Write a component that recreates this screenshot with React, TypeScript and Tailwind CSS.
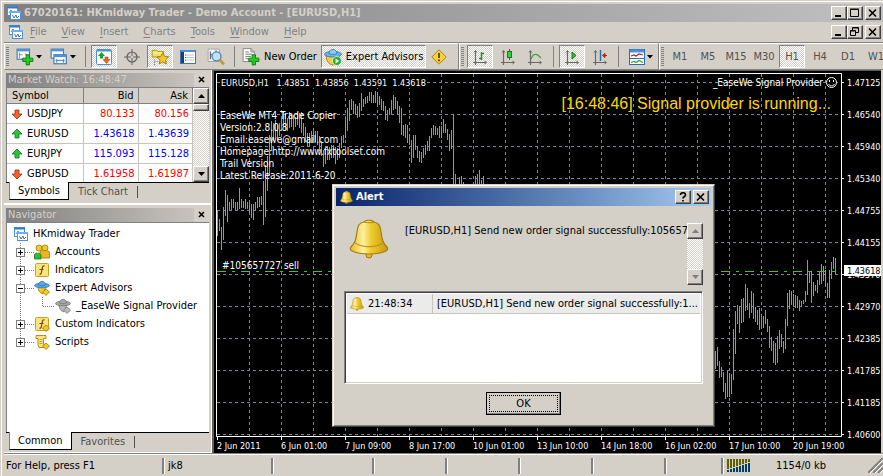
import type { ReactNode } from 'react';

const raised =
  'border border-t-white border-l-white border-r-[#404040] border-b-[#404040] shadow-[inset_-1px_-1px_0_#808080]';
const pressed = 'border border-t-[#808080] border-l-[#808080] border-r-white border-b-white';
const checker =
  'bg-[#ebe8e3] bg-[repeating-conic-gradient(#d4d0c8_0_25%,#ffffff_0_50%)] bg-[length:2px_2px]';

/* ---------- icons ---------- */

function Icon({ size = 16, children }: { size?: number; children: ReactNode }) {
  return (
    <svg width={size} height={size} viewBox="0 0 16 16" className="shrink-0" aria-hidden="true">
      {children}
    </svg>
  );
}

function AppIcon() {
  return (
    <Icon>
      <rect x="1.5" y="1.5" width="10" height="9" fill="#fff" stroke="#4a90dc" />
      <path d="M1 2.5h11" stroke="#2f7bd0" strokeWidth="2" />
      <path d="M3 8l2-3 2 3 2-2" fill="none" stroke="#4a90dc" />
      <rect x="4.5" y="6.5" width="10" height="8" fill="#fff" stroke="#4a90dc" />
      <path d="M4 7h11" stroke="#6ab0f0" strokeWidth="2" />
      <path d="M6.500 10l1.500 3 2-3 1 3 2-2" fill="none" stroke="#3878c0" />
    </Icon>
  );
}

function NewChartIcon() {
  return (
    <Icon size={18}>
      <rect x="1" y="1" width="11" height="9" fill="#fff" stroke="#3c78b4" />
      <path d="M1 2h11" stroke="#4a90dc" strokeWidth="2" />
      <path d="M3 4v5M3 6h3M8 5l2 2" stroke="#7898b8" />
      <path d="M9 6h3v3h3v3h-3v3H9v-3H6V9h3z" fill="#26c826" stroke="#0a7a0a" strokeWidth=".8" />
    </Icon>
  );
}

function ProfilesIcon() {
  return (
    <Icon size={18}>
      <rect x="1" y="1" width="11" height="8" fill="#fff" stroke="#3c78b4" />
      <path d="M1 2h11" stroke="#4a90dc" strokeWidth="2" />
      <rect x="3.500" y="6" width="11" height="8" fill="#eef5fc" stroke="#3c78b4" />
      <path d="M3.500 7h11" stroke="#4a90dc" strokeWidth="2" />
      <path d="M5 11h8M6 10v3M12 10v3" stroke="#4878a8" strokeWidth=".8" />
    </Icon>
  );
}

function MarketWatchIcon() {
  return (
    <Icon>
      <rect x=".5" y=".5" width="15" height="15" rx="1" fill="#fff" stroke="#4a90dc" />
      <path d="M1 1.500h14" stroke="#4a90dc" strokeWidth="2" />
      <path d="M5.500 3L2 7h2v2.500h3V7h2z" fill="#20a020" />
      <path d="M10.500 14.500l3.500-4h-2V8H9v2.500H7z" fill="#f06020" stroke="#b03010" strokeWidth=".5" />
    </Icon>
  );
}

function CrosshairIcon() {
  return (
    <Icon>
      <circle cx="8" cy="8" r="5" fill="none" stroke="#606060" strokeWidth="1.200" />
      <path d="M8 0v7M8 9v7M0 8h7M9 8h7" stroke="#606060" />
    </Icon>
  );
}

function NavigatorIcon() {
  return (
    <Icon size={18}>
      <path d="M1 2h4l1 1h5v5H1z" fill="#f8dc60" stroke="#b08a10" strokeWidth=".8" />
      <path d="M1.500 4.500h9" stroke="#fff4b0" />
      <path d="M3 10v5M3 12h3" stroke="#909090" strokeDasharray="1 1" />
      <path
        d="M10.500 4l1.600 3.400 3.600.5-2.700 2.600.7 3.700-3.200-1.800-3.200 1.800.7-3.700-2.700-2.600 3.600-.5z"
        fill="#f4c828"
        stroke="#a07808"
        strokeWidth=".8"
      />
    </Icon>
  );
}

function TerminalIcon() {
  return (
    <Icon>
      <rect x=".5" y="1.500" width="15" height="13" fill="#fff" stroke="#3c78b4" />
      <path d="M1 2h14" stroke="#4a90dc" strokeWidth="2" />
      <path d="M2.500 3v11" stroke="#1c3c78" strokeWidth="3" />
      <path d="M6 6h8M6 8.500h8M6 11h8" stroke="#b8c4d4" />
      <path d="M5 6h1M5 8.500h1M5 11h1" stroke="#c03020" />
    </Icon>
  );
}

function TesterIcon() {
  return (
    <Icon size={18}>
      <path d="M1 1h10v11H1z" fill="#f4f4f4" stroke="#a0a0a0" strokeWidth=".8" />
      <path d="M3 3v7M3 6h3M8 2v5" stroke="#606060" />
      <circle cx="8.500" cy="7.500" r="4" fill="#c4e0f8" stroke="#4a88c0" strokeWidth="1.200" />
      <path d="M11.500 10.500l3.500 4" stroke="#c89820" strokeWidth="2.400" />
    </Icon>
  );
}

function NewOrderIcon() {
  return (
    <Icon size={18}>
      <path d="M1 .5h7l3 3V12H1z" fill="#fff" stroke="#808080" strokeWidth=".8" />
      <path d="M8 .5v3h3M3 3.500h3M3 5.500h6M3 7.500h5M3 9.500h3" fill="none" stroke="#707070" strokeWidth=".8" />
      <path d="M9 6h3v3h3v3h-3v3H9v-3H6V9h3z" fill="#26c826" stroke="#0a7a0a" strokeWidth=".8" />
    </Icon>
  );
}

function ExpertsIcon() {
  return (
    <Icon size={18}>
      <path d="M2 7c0 5 3 8 6 8s6-3 6-8z" fill="#f4cc40" stroke="#a88010" strokeWidth=".8" />
      <ellipse cx="8" cy="5.500" rx="7.500" ry="2.500" fill="#6cb4ec" stroke="#2c70b0" strokeWidth=".7" />
      <path d="M4.500 5c0-5 7-5 7 0-2 1-5 1-7 0z" fill="#8cc8f4" stroke="#2c70b0" strokeWidth=".7" />
      <circle cx="11.500" cy="11.500" r="4" fill="#20b030" stroke="#fff" strokeWidth=".6" />
      <path d="M10.300 9.300v4.400l3.200-2.200z" fill="#fff" />
    </Icon>
  );
}

function WarningIcon() {
  return (
    <Icon>
      <path d="M8 .8L15.200 8 8 15.200.8 8z" fill="#f8d038" stroke="#b08408" />
      <path d="M8 4v5M8 10.500v1.800" stroke="#604000" strokeWidth="1.800" />
    </Icon>
  );
}

function Axes({ children }: { children: ReactNode }) {
  return (
    <Icon>
      <path d="M3.500 2v14M1 13.500h13" fill="none" stroke="#686868" strokeWidth="1.200" />
      <path d="M2 3.500L3.500 1.500 5 3.500M12.500 12l2 1.500-2 1.500" fill="none" stroke="#686868" />
      {children}
    </Icon>
  );
}

function IndicatorsIcon() {
  return (
    <Icon>
      <rect x=".5" y=".5" width="15" height="15" fill="#fff" stroke="#2c6cb0" />
      <path d="M1 2h14" stroke="#4a90dc" strokeWidth="3" />
      <path d="M1 9.500h14" stroke="#2c6cb0" />
      <path d="M2 7l3-1 2 1 3-2 4 1" fill="none" stroke="#a02820" strokeWidth="1.200" />
      <path d="M2 13.500l3-1 2 1 3-2 4 2" fill="none" stroke="#30a030" strokeWidth="1.200" />
    </Icon>
  );
}

function PriceArrow({ up }: { up: boolean }) {
  return (
    <svg width="12" height="12" viewBox="0 0 12 12" className="shrink-0" aria-hidden="true">
      {up ? (
        <path d="M6 1l5 5H8v4H4V6H1z" fill="#30c040" stroke="#107820" strokeWidth=".8" />
      ) : (
        <path d="M6 11L1 6h3V2h4v4h3z" fill="#f06030" stroke="#a03010" strokeWidth=".8" />
      )}
    </svg>
  );
}

function Bell({ size }: { size: number }) {
  return (
    <svg width={size} height={size} viewBox="0 0 40 40" className="shrink-0" aria-hidden="true">
      <defs>
        <linearGradient id="bell" x1="0" x2="1">
          <stop offset="0" stopColor="#e8bc20" />
          <stop offset=".35" stopColor="#fdf0a0" />
          <stop offset=".55" stopColor="#f0cc30" />
          <stop offset="1" stopColor="#c89808" />
        </linearGradient>
      </defs>
      <ellipse cx="20" cy="36" rx="3" ry="3" fill="#e8b820" stroke="#a07808" />
      <path
        d="M20 1c3 0 4 1 5 2 5 1 6 3 7 10 1 8 2 11 6 15 1 1 1 3-1 4-8 4-26 4-34 0-2-1-2-3-1-4 4-4 5-7 6-15 1-7 2-9 7-10 1-1 2-2 5-2z"
        fill="url(#bell)"
        stroke="#a07c10"
        strokeWidth="1.200"
      />
      <path d="M6 24c8 5 20 5 28 0M15 3c2 1 8 1 10 0" fill="none" stroke="#b08a10" />
    </svg>
  );
}

function AccountsIcon() {
  return (
    <Icon>
      <circle cx="5" cy="4" r="3" fill="#f4c828" stroke="#a07808" strokeWidth=".8" />
      <circle cx="11" cy="4" r="3" fill="#f4c828" stroke="#a07808" strokeWidth=".8" />
      <path d="M6 14V8c0-2 9-2 9.500 0v6z" fill="#e8b820" stroke="#a07808" strokeWidth=".8" />
      <path d="M.5 15v-4c0-2.500 6-2.500 6.500 0v4z" fill="#38b838" stroke="#187818" strokeWidth=".8" />
    </Icon>
  );
}

function FunctionIcon({ tagged = false }: { tagged?: boolean }) {
  return (
    <Icon>
      <rect x="1.500" y="1.500" width="13" height="13" rx="1" fill="#fbe480" stroke="#c8a020" />
      <path d="M10.500 4c-2-.5-2 1-2.400 3l-.6 3c-.3 2-1 2.500-2 2M5.500 7.500h4" fill="none" stroke="#705008" strokeWidth="1.200" />
      {tagged && <path d="M12 9l3.500 3-3.500 3.500L8.500 12z" fill="#f4c828" stroke="#a07808" strokeWidth=".8" />}
    </Icon>
  );
}

function HatIcon({ muted = false }: { muted?: boolean }) {
  const brim = muted ? '#a8a8a8' : '#58a8e8';
  const edge = muted ? '#707070' : '#2c70b0';
  const gold = muted ? '#b8b8b8' : '#f4c828';
  const goldEdge = muted ? '#787878' : '#a07808';
  return (
    <Icon>
      <path d="M4 7c0 4 2 6 5 7l3-7z" fill={gold} stroke={goldEdge} strokeWidth=".8" />
      <ellipse cx="8" cy="5.500" rx="7.500" ry="2.300" fill={brim} stroke={edge} strokeWidth=".7" />
      <path d="M4.500 5c0-5 7-5 7 0-2 1-5 1-7 0z" fill={brim} stroke={edge} strokeWidth=".7" />
      <path d="M12 9l3.500 3-3.500 3.500L8.500 12z" fill={gold} stroke={goldEdge} strokeWidth=".8" />
    </Icon>
  );
}

function ScriptIcon() {
  return (
    <Icon>
      <path d="M2 1.500h10v3H9.500v6H12l1 3H5L4 10.500v-6H2z" fill="#fbe480" stroke="#b89018" />
      <path d="M5.500 5.500h3M5.500 7.500h3M5.500 9.500h3" stroke="#b89018" strokeWidth=".8" />
      <path d="M12 9l3.500 3-3.500 3.500L8.500 12z" fill="#f4c828" stroke="#a07808" strokeWidth=".8" />
    </Icon>
  );
}

/* ---------- window frame ---------- */

type Glyph = 'min' | 'max' | 'restore' | 'close' | 'help';

function CaptionButton({ glyph, label }: { glyph: Glyph; label: string }) {
  return (
    <button aria-label={label} className={`flex h-[14px] w-4 items-center justify-center bg-[#d4d0c8] ${raised}`}>
      <svg width="12" height="10" viewBox="0 0 12 10" aria-hidden="true">
        {glyph === 'min' && <path d="M2 8h6" stroke="#000" strokeWidth="2" />}
        {glyph === 'max' && <path d="M1.500 1.500h8v7h-8zM1 1h9" fill="none" stroke="#000" strokeWidth="1" />}
        {glyph === 'restore' && (
          <path d="M3.500 3V.5h6v5H7M1.500 3.500h5v5h-5zM1 4h6M3 1h6" fill="none" stroke="#000" />
        )}
        {glyph === 'close' && <path d="M2 1.500l7 7M9 1.500l-7 7" stroke="#000" strokeWidth="1.600" />}
        {glyph === 'help' && (
          <path d="M3.500 3c0-3 5-3 5 0 0 1.500-2.500 1.500-2.500 3.500M6 8v1.500" fill="none" stroke="#000" strokeWidth="1.700" />
        )}
      </svg>
    </button>
  );
}

function WindowButtons({ restore = false }: { restore?: boolean }) {
  return (
    <div className="ml-auto flex pr-[2px]">
      <CaptionButton glyph="min" label="Minimize" />
      <CaptionButton glyph={restore ? 'restore' : 'max'} label={restore ? 'Restore' : 'Maximize'} />
      <div className="w-[2px]" />
      <CaptionButton glyph="close" label="Close" />
    </div>
  );
}

const menus = ['File', 'View', 'Insert', 'Charts', 'Tools', 'Window', 'Help'];

function MenuBar() {
  return (
    <nav className="flex h-5 items-center pl-1">
      <AppIcon />
      <div className="ml-[6px] flex gap-[15px] text-[#808080]">
        {menus.map((m) => (
          <button key={m}>
            <span className="underline underline-offset-2">{m[0]}</span>
            {m.slice(1)}
          </button>
        ))}
      </div>
      <WindowButtons restore />
    </nav>
  );
}

/* ---------- toolbars ---------- */

function Grip() {
  return (
    <div className="mr-[2px] ml-px h-5 w-[3px] shrink-0 bg-[repeating-linear-gradient(#808080_0_1px,#d4d0c8_1px_2px)]" />
  );
}

function Separator() {
  return <div className="mx-[5px] h-[21px] w-px shrink-0 bg-[#808080]" />;
}

function ToolButton({ label, on = false, wide = false, children }: {
  label: string;
  on?: boolean;
  wide?: boolean;
  children: ReactNode;
}) {
  return (
    <button
      aria-label={label}
      aria-pressed={on}
      className={`flex h-[23px] shrink-0 items-center justify-center ${wide ? 'gap-1 px-[2px]' : 'w-[26px]'} ${
        on ? `${pressed} ${checker}` : ''
      }`}
    >
      {children}
    </button>
  );
}

function DropButton({ label, children }: { label: string; children: ReactNode }) {
  return (
    <button aria-label={label} className="flex h-[23px] w-[34px] shrink-0 items-center justify-center gap-[2px]">
      {children}
      <svg width="6" height="4" viewBox="0 0 6 4" aria-hidden="true">
        <path d="M0 0h6L3 3.500z" fill="#000" />
      </svg>
    </button>
  );
}

function ToolbarBand({ grow = false, children }: { grow?: boolean; children: ReactNode }) {
  return (
    <div
      role="toolbar"
      className={`flex h-[27px] items-center border-t border-b border-l border-t-white border-b-[#808080] border-l-white ${
        grow ? 'min-w-0 grow overflow-hidden' : 'shrink-0 border-r border-r-[#808080]'
      }`}
    >
      <Grip />
      {children}
    </div>
  );
}

const periods = ['M1', 'M5', 'M15', 'M30', 'H1', 'H4', 'D1', 'W1'];

function Toolbars() {
  return (
    <div className="flex border-t border-[#808080]">
      <ToolbarBand>
        <div className="flex w-[447px] items-center pl-px whitespace-nowrap">
          <DropButton label="New chart"><NewChartIcon /></DropButton>
          <DropButton label="Profiles"><ProfilesIcon /></DropButton>
          <Separator />
          <div className="flex gap-[2px]">
            <ToolButton label="Market Watch" on><MarketWatchIcon /></ToolButton>
            <ToolButton label="Data Window"><CrosshairIcon /></ToolButton>
            <ToolButton label="Navigator" on><NavigatorIcon /></ToolButton>
            <ToolButton label="Terminal"><TerminalIcon /></ToolButton>
            <ToolButton label="Strategy Tester"><TesterIcon /></ToolButton>
          </div>
          <Separator />
          <ToolButton label="New Order" wide><NewOrderIcon />New Order</ToolButton>
          <div className="w-[2px]" />
          <ToolButton label="Expert Advisors" on wide><ExpertsIcon />Expert Advisors</ToolButton>
          <ToolButton label="Options"><WarningIcon /></ToolButton>
        </div>
      </ToolbarBand>
      <ToolbarBand>
        <div className="flex w-[192px] items-center pl-px">
          <ToolButton label="Bar Chart" on>
            <Axes><path d="M9.500 3v8M7 9.500h2.500M9.500 4.500H12" stroke="#209020" strokeWidth="1.500" fill="none" /></Axes>
          </ToolButton>
          <div className="w-[2px]" />
          <ToolButton label="Candlesticks">
            <Axes><path d="M9.500 0v11" stroke="#108010" /><rect x="7.500" y="2.500" width="4" height="6" fill="#30d040" stroke="#108010" /></Axes>
          </ToolButton>
          <div className="w-[2px]" />
          <ToolButton label="Line Chart">
            <Axes><path d="M4 10c2-6 6-6 10-1" stroke="#40a040" strokeWidth="1.300" fill="none" /></Axes>
          </ToolButton>
          <Separator />
          <ToolButton label="Auto Scroll" on>
            <Axes><path d="M8 3v7l4-3.500z" fill="#30c040" stroke="#108010" /></Axes>
          </ToolButton>
          <div className="w-[2px]" />
          <ToolButton label="Chart Shift">
            <Axes><path d="M8.500 1v11" stroke="#2c6cb0" strokeWidth="1.500" /><path d="M15 6.500h-3M13 4.500L10.500 6.500l2.500 2z" fill="#d04020" stroke="#a02810" /></Axes>
          </ToolButton>
          <Separator />
          <DropButton label="Indicators"><IndicatorsIcon /></DropButton>
        </div>
      </ToolbarBand>
      <ToolbarBand grow>
        {periods.map((p) => (
          <button
            key={p}
            aria-pressed={p === 'H1'}
            className={`mx-px h-[23px] w-[26px] shrink-0 text-center text-[#505050] ${
              p === 'H1' ? `${pressed} ${checker}` : ''
            }`}
          >
            {p}
          </button>
        ))}
      </ToolbarBand>
    </div>
  );
}

/* ---------- left panels ---------- */

function PanelTitle({ children }: { children: ReactNode }) {
  return (
    <header className="flex h-[15px] items-center">
      <h2 className="h-[14px] flex-1 bg-linear-to-r from-[#808080] to-[#c8c4bc] pl-[2px] leading-[13px] text-[#d4d0c8]">
        {children}
      </h2>
      <button aria-label="Close panel" className="flex w-[15px] justify-center">
        <svg width="7" height="7" viewBox="0 0 7 7" aria-hidden="true">
          <path d="M1 1l5 5M6 1L1 6" stroke="#000" strokeWidth="1.600" />
        </svg>
      </button>
    </header>
  );
}

function PanelTabs({ tabs }: { tabs: [string, string] }) {
  return (
    <div role="tablist" className="flex h-[18px] shrink-0 items-start">
      <div className="h-px w-[3px] bg-black" />
      <button role="tab" aria-selected className="h-[18px] border-r border-b border-l border-black border-l-[#808080] bg-white px-2 leading-4">
        {tabs[0]}
      </button>
      <div className="flex h-[18px] flex-1 items-center border-t border-black pl-[9px] text-[#505050]">
        <button role="tab" aria-selected={false}>{tabs[1]}</button>
        <div className="ml-[9px] h-3 w-px bg-[#505050]" />
      </div>
    </div>
  );
}

function ScrollButton({ down = false, dim = false }: { down?: boolean; dim?: boolean }) {
  return (
    <button
      aria-label={down ? 'Scroll down' : 'Scroll up'}
      className={`flex h-4 w-full shrink-0 items-center justify-center bg-[#d4d0c8] ${raised}`}
    >
      <svg width="7" height="4" viewBox="0 0 7 4" aria-hidden="true">
        <path d={down ? 'M0 0h7L3.500 4z' : 'M0 4h7L3.500 0z'} fill={dim ? '#808080' : '#000'} />
      </svg>
    </button>
  );
}

const quotes = [
  { symbol: 'USDJPY', bid: '80.133', ask: '80.156', up: false },
  { symbol: 'EURUSD', bid: '1.43618', ask: '1.43639', up: true },
  { symbol: 'EURJPY', bid: '115.093', ask: '115.128', up: true },
  { symbol: 'GBPUSD', bid: '1.61958', ask: '1.61987', up: false },
];

function MarketWatch() {
  const head = 'h-4 border-r border-b border-[#808080] p-0 font-normal';
  const cell = 'h-5 border-r border-b border-[#c8c4bc] p-0';
  return (
    <section className="flex flex-col border-r border-b border-white p-[2px] pb-[3px]">
      <PanelTitle>Market Watch: 16:48:47</PanelTitle>
      <div className="flex h-[95px] border-t border-l border-[#808080] bg-white">
        <div className="flex-1 overflow-hidden">
          <table className="w-full table-fixed border-separate border-spacing-0">
            <thead className="bg-[#d4d0c8]">
              <tr>
                <th className={`${head} w-[77px] pl-[5px] text-left`}>Symbol</th>
                <th className={`${head} pr-1 text-right`}>Bid</th>
                <th className={`${head} pr-1 text-right`}>Ask</th>
              </tr>
            </thead>
            <tbody>
              {quotes.map((q) => (
                <tr key={q.symbol} className={q.up ? 'text-[#0000ff]' : 'text-[#ff0000]'}>
                  <td className={`${cell} pl-1 text-black`}>
                    <div className="flex items-center gap-1">
                      <PriceArrow up={q.up} />
                      {q.symbol}
                    </div>
                  </td>
                  <td className={`${cell} pr-[3px] text-right`}>{q.bid}</td>
                  <td className={`${cell} pr-[3px] text-right`}>{q.ask}</td>
                </tr>
              ))}
            </tbody>
          </table>
        </div>
        <div className={`flex w-4 flex-col ${checker}`}>
          <ScrollButton />
          <div className={`h-[7px] bg-[#d4d0c8] ${raised}`} />
          <div className="flex-1" />
          <ScrollButton down />
        </div>
      </div>
      <PanelTabs tabs={['Symbols', 'Tick Chart']} />
    </section>
  );
}

function ExpandBox({ open, last }: { open: boolean; last: boolean }) {
  return (
    <svg width="22" height="18" viewBox="0 0 22 18" className="shrink-0" aria-hidden="true">
      <path d={last ? 'M8.500 0v9M13 9.500h9' : 'M8.500 0v18M13 9.500h9'} stroke="#808080" strokeDasharray="1 1" />
      <rect x="4.500" y="5.500" width="8" height="8" fill="#fff" stroke="#808080" />
      <path d={open ? 'M6 9.500h5' : 'M6 9.500h5M8.500 7v5'} stroke="#000" />
    </svg>
  );
}

const tree = [
  { name: 'Accounts', icon: <AccountsIcon />, open: false },
  { name: 'Indicators', icon: <FunctionIcon />, open: false },
  { name: 'Expert Advisors', icon: <HatIcon />, open: true, child: '_EaseWe Signal Provider' },
  { name: 'Custom Indicators', icon: <FunctionIcon tagged />, open: false },
  { name: 'Scripts', icon: <ScriptIcon />, open: false },
];

function Navigator() {
  const row = 'flex h-[18px] items-center whitespace-nowrap';
  return (
    <section className="flex min-h-0 flex-1 flex-col border-t border-r border-b border-white p-[2px]">
      <PanelTitle>Navigator</PanelTitle>
      <div className="min-h-0 flex-1 overflow-hidden border-t border-l border-[#808080] bg-white pt-[2px]">
        <div className={`${row} gap-1 pl-[6px]`}>
          <AppIcon />
          HKmidway Trader
        </div>
        <ul className="pl-[5px]">
          {tree.map((n, i) => (
            <li key={n.name}>
              <div className={row}>
                <ExpandBox open={n.open} last={i === tree.length - 1} />
                {n.icon}
                <span className="ml-[5px]">{n.name}</span>
              </div>
              {n.child && (
                <div className={row}>
                  <svg width="43" height="18" viewBox="0 0 43 18" className="shrink-0" aria-hidden="true">
                    <path d="M8.500 0v18M30.500 0v9.500H42" fill="none" stroke="#808080" strokeDasharray="1 1" />
                  </svg>
                  <HatIcon muted />
                  <span className="ml-[5px]">{n.child}</span>
                </div>
              )}
            </li>
          ))}
        </ul>
      </div>
      <PanelTabs tabs={['Common', 'Favorites']} />
    </section>
  );
}

/* ---------- price chart ---------- */

/* High/low pairs of consecutive hourly bars, three ticks to a pixel. */
const earlyBars = [
  430, 503, 453, 490, 477, 546, 417, 515, 366, 443, 380, 462, 402, 430, 393, 425, 393, 420, 402, 425, 402, 425, 360,
  422, 393, 420, 398, 420, 393, 422, 403, 423, 406, 435, 407, 450, 408, 456, 402, 430, 387, 420, 387, 418, 384, 412,
  340, 470, 290, 446, 265, 370, 200, 320, 160, 250, 165, 218, 157, 207, 170, 218, 165, 205, 150, 190, 133, 170, 140,
  185, 150, 188, 133, 180, 140, 176, 140, 185, 147, 178, 133, 170, 135, 180, 133, 195, 165, 205, 178, 222, 195, 235,
  195, 238, 190, 225, 180, 215, 188, 222, 190, 232, 205, 250, 220, 265, 245, 297, 240, 288, 235, 275, 238, 275, 230,
  270, 232, 270, 238, 287, 240, 275, 225, 270, 205, 240, 200, 225, 148, 210, 120, 188, 95, 160, 92, 125, 100, 138, 107,
  142, 115, 150, 105, 148, 75, 130, 92, 118, 87, 107, 85, 105, 73, 100, 72, 105, 80, 105, 70, 105, 72, 110, 85, 112, 92,
  125, 100, 130, 115, 155, 125, 160, 120, 142, 95, 138, 80, 125, 87, 122, 100, 140, 115, 165, 120, 200, 170, 205, 167,
  210, 172, 225, 200, 230, 215, 285, 200, 270, 200, 245, 238, 270, 248, 282, 252, 286, 240, 270, 232, 262, 220, 248,
  205, 248, 180, 210, 172, 200, 175, 200, 180, 200, 175, 210, 175, 210, 153, 195, 168, 195, 183, 215, 198, 248, 185,
  242, 140, 360, 318, 370, 352, 380, 327, 380, 323, 380, 342, 390, 355, 390, 358, 392, 354, 390, 352, 390, 350, 388,
  323, 370, 318, 365, 306, 360, 335, 370, 323, 370,
];

const lateBars = [
  303, 357, 291, 348, 333, 384, 352, 382, 366, 426, 400, 447, 363, 440, 370, 441, 372, 432, 237, 390, 183, 312, 165, 222,
  170, 248, 147, 218, 144, 215, 102, 183, 114, 180, 159, 204, 123, 188, 129, 207, 171, 216, 180, 225, 174, 240, 198, 237,
  198, 235, 180, 222, 207, 246, 228, 294, 261, 303, 273, 339, 279, 345, 258, 339, 240, 297, 252, 291, 273, 309, 207, 297,
  129, 228, 120, 177, 123, 165, 132, 168, 135, 174, 138, 174, 150, 183, 153, 168, 150, 162, 123, 156, 30, 135, 66, 99,
  63, 159, 96, 138, 105, 123, 90, 129, 63, 105, 42, 102, 48, 93, 60, 108, 99, 144, 60, 144, 36, 87, 21, 57, 24, 72,
];

function barPath(data: number[], left: number, top: number) {
  let d = '';
  for (let i = 0; i < data.length; i += 2) {
    d += `M${left + i + 0.5} ${top + Math.round(data[i] / 3)}V${top + Math.round(data[i + 1] / 3)}`;
  }
  return d;
}

const prices = [
  '1.47125', '1.46540', '1.45940', '1.45340', '1.44755', '1.44155', '1.43570', '1.42970', '1.42385', '1.41785',
  '1.41185', '1.40600',
];
const times = [
  '2 Jun 2011', '6 Jun 01:00', '7 Jun 09:00', '8 Jun 17:00', '10 Jun 01:00', '13 Jun 10:00', '14 Jun 18:00',
  '16 Jun 02:00', '17 Jun 10:00', '20 Jun 19:00',
];
const credits = [
  'EaseWe MT4 Trade Copier',
  'Version:2.8.0.8',
  'Email:easewe@gmail.com',
  'Homepage:http://www.fxtoolset.com',
  'Trail Version',
  'Latest Release:2011-6-20',
];

function Chart() {
  return (
    <main className="mr-[2px] min-w-0 flex-1 overflow-hidden border-t border-l-2 border-[#606060] bg-black">
      <svg width="100%" height="100%" className="block text-[10px]" role="img" aria-label="EURUSD hourly chart">
        <g stroke="#778899" strokeDasharray="3 3">
          {prices.map((p, i) => (
            <path key={p} d={`M3 ${11.5 + i * 32}H627`} />
          ))}
          {Array.from({ length: 19 }, (_, i) => (
            <path key={i} d={`M${35.5 + i * 32} 3V365`} />
          ))}
        </g>
        <path d={barPath(earlyBars, 3, -3)} stroke="#00ff00" />
        <path d={barPath(lateBars, 501, 179)} stroke="#00ff00" />
        <path d="M3 200.500H627" stroke="#32cd32" strokeDasharray="9 6 3 6" />
        <path d="M2.500 365.500V2.500H627.500V365.500z" fill="none" stroke="#fff" />
        <rect x="6" y="6" width="199" height="11" fill="#000" />
        <g fill="#fff">
          <text x="7" y="15" xmlSpace="preserve" className="text-[9px]">EURUSD,H1   1.43851  1.43856  1.43591  1.43618</text>
          {credits.map((c, i) => (
            <text key={c} x="6" y={48 + i * 12}>{c}</text>
          ))}
          <text x="8" y="198">#105657727 sell</text>
          <text x="609" y="15" textAnchor="end">_EaseWe Signal Provider</text>
          <g className="text-[9px]">
            {prices.map((p, i) => (
              <text key={p} x="633" y={15 + i * 32}>{p}</text>
            ))}
            {times.map((t, i) => (
              <text key={t} x={3 + i * 64} y="378">{t}</text>
            ))}
          </g>
        </g>
        <g stroke="#fff" fill="none">
          {prices.map((p, i) => (
            <path key={p} d={`M628 ${11.5 + i * 32}h2`} />
          ))}
          {times.map((t, i) => (
            <path key={t} d={`M${3.5 + i * 64} 366v3`} />
          ))}
          <circle cx="617.500" cy="11.500" r="5" fill="#000" />
          <path d="M614.500 13c1 2.500 5 2.500 6 0M615.500 9v2M619.500 9v2" />
        </g>
        <rect x="630" y="194" width="40" height="11" fill="#fff" />
        <text x="633" y="203" fill="#000" className="text-[9px]">1.43618</text>
        <text x="617" y="38" textAnchor="end" fill="#ffd700" className="font-['Liberation_Sans',Arial,sans-serif] text-[16px]">
          [16:48:46] Signal provider is running...
        </text>
      </svg>
    </main>
  );
}

/* ---------- status bar ---------- */

function StatusBar() {
  const pane = 'h-4 shrink-0 border-l-2 border-[#808080] pl-1 leading-4 shadow-[inset_1px_0_0_#ffffff]';
  return (
    <footer className="flex h-[22px] shrink-0 items-center border-t border-white pl-[2px] whitespace-nowrap">
      <div className="min-w-0 flex-1">For Help, press F1</div>
      <div className={`${pane} w-[109px]`}>jk8</div>
      <div className={`${pane} w-[101px]`} />
      <div className={`${pane} w-[73px]`} />
      <div className={`${pane} w-[73px]`} />
      <div className={`${pane} w-[73px]`} />
      <div className={`${pane} w-[73px]`} />
      <div className={`${pane} w-[57px]`} />
      <div className={`${pane} flex w-[162px] items-center`}>
        <svg width="24" height="13" viewBox="0 0 24 13" aria-hidden="true">
          {Array.from({ length: 8 }, (_, i) => (
            <g key={i}>
              <rect x={i * 3} y="0" width="2" height={10 - i} fill="#606000" />
              <rect x={i * 3} y={11 - i} width="2" height={2 + i} fill="#004060" />
            </g>
          ))}
        </svg>
        <span className="ml-[25px]">1154/0 kb</span>
        <svg width="15" height="15" viewBox="0 0 15 15" className="ml-auto" aria-hidden="true">
          <path d="M0 15L15 0M5 15L15 5M10 15l5-5" stroke="#808080" strokeWidth="2" />
          <path d="M2 15L15 2M7 15l8-8M12 15l3-3" stroke="#fff" />
        </svg>
      </div>
    </footer>
  );
}

/* ---------- alert dialog ---------- */

function AlertDialog() {
  return (
    <div
      role="dialog"
      aria-labelledby="alert-title"
      className="absolute top-[184px] left-[332px] flex h-[243px] w-[383px] flex-col border border-t-[#d4d0c8] border-r-[#404040] border-b-[#404040] border-l-[#d4d0c8] bg-[#d4d0c8] p-[3px] shadow-[inset_1px_1px_0_#ffffff,inset_-1px_-1px_0_#808080]"
    >
      <header className="flex h-[18px] shrink-0 items-center bg-linear-to-r from-[#0a246a] to-[#a6caf0] pr-[2px] pl-1">
        <Bell size={13} />
        <h1 id="alert-title" className="ml-[3px] font-bold text-white">Alert</h1>
        <div className="ml-auto flex gap-[2px]">
          <CaptionButton glyph="help" label="Help" />
          <CaptionButton glyph="close" label="Close alert" />
        </div>
      </header>
      <div className="flex flex-1 flex-col px-2 pt-[13px] pb-2">
        <div className="flex items-start">
          <div className="pl-[5px]">
            <Bell size={40} />
          </div>
          <textarea
            aria-label="Alert message"
            readOnly
            wrap="off"
            className="ml-4 h-[66px] min-w-0 flex-1 resize-none overflow-hidden bg-transparent pt-1 leading-4 outline-none"
            value="[EURUSD,H1] Send new order signal successfully:105657727"
          />
          <div className={`mt-1 flex h-[62px] w-4 flex-col justify-between ${checker}`}>
            <ScrollButton dim />
            <ScrollButton down dim />
          </div>
        </div>
        <div className="mt-[6px] h-[93px] border border-t-[#808080] border-r-white border-b-white border-l-[#808080] bg-white shadow-[inset_1px_1px_0_#404040,inset_-1px_-1px_0_#d4d0c8]">
          <table className="mx-[2px] mt-[2px] w-[calc(100%-4px)] table-fixed border-separate border-spacing-0 bg-[#ebebeb]">
            <tbody>
              <tr>
                <td className="h-5 w-[86px] border-r border-b border-[#c8c4bc] p-0 pl-[3px]">
                  <div className="flex items-center gap-1">
                    <Bell size={14} />
                    21:48:34
                  </div>
                </td>
                <td className="h-5 border-b border-[#c8c4bc] p-0 pl-1 whitespace-nowrap">
                  [EURUSD,H1] Send new order signal successfully:1...
                </td>
              </tr>
            </tbody>
          </table>
        </div>
        <button className={`mx-auto mt-2 h-[23px] w-[75px] bg-[#d4d0c8] p-[2px] outline outline-black -outline-offset-1 ${raised}`}>
          <span className="block h-full border border-dotted border-black leading-[15px]">OK</span>
        </button>
      </div>
    </div>
  );
}

export default function App() {
  return (
    <div className="relative flex h-screen flex-col overflow-hidden bg-[#d4d0c8] pt-px pl-px font-['DejaVu_Sans_Condensed',Tahoma,'Noto_Sans',sans-serif] text-[11px] leading-[14px] text-black">
      <div className="flex min-h-0 flex-1 flex-col border-t border-l border-white pt-[2px] pl-[2px]">
        <header className="flex h-[18px] shrink-0 items-center bg-linear-to-r from-[#808080] to-[#c0c0c0] pl-[2px]">
          <AppIcon />
          <h1 className="ml-[2px] font-bold whitespace-nowrap text-[#d4d0c8]">
            67020161: HKmidway Trader - Demo Account - [EURUSD,H1]
          </h1>
          <WindowButtons />
        </header>
        <MenuBar />
        <Toolbars />
        <div className="flex min-h-0 flex-1 border-b border-[#808080]">
          <aside className="flex w-[208px] shrink-0 flex-col">
            <MarketWatch />
            <Navigator />
          </aside>
          <Chart />
        </div>
        <StatusBar />
      </div>
      <AlertDialog />
    </div>
  );
}
